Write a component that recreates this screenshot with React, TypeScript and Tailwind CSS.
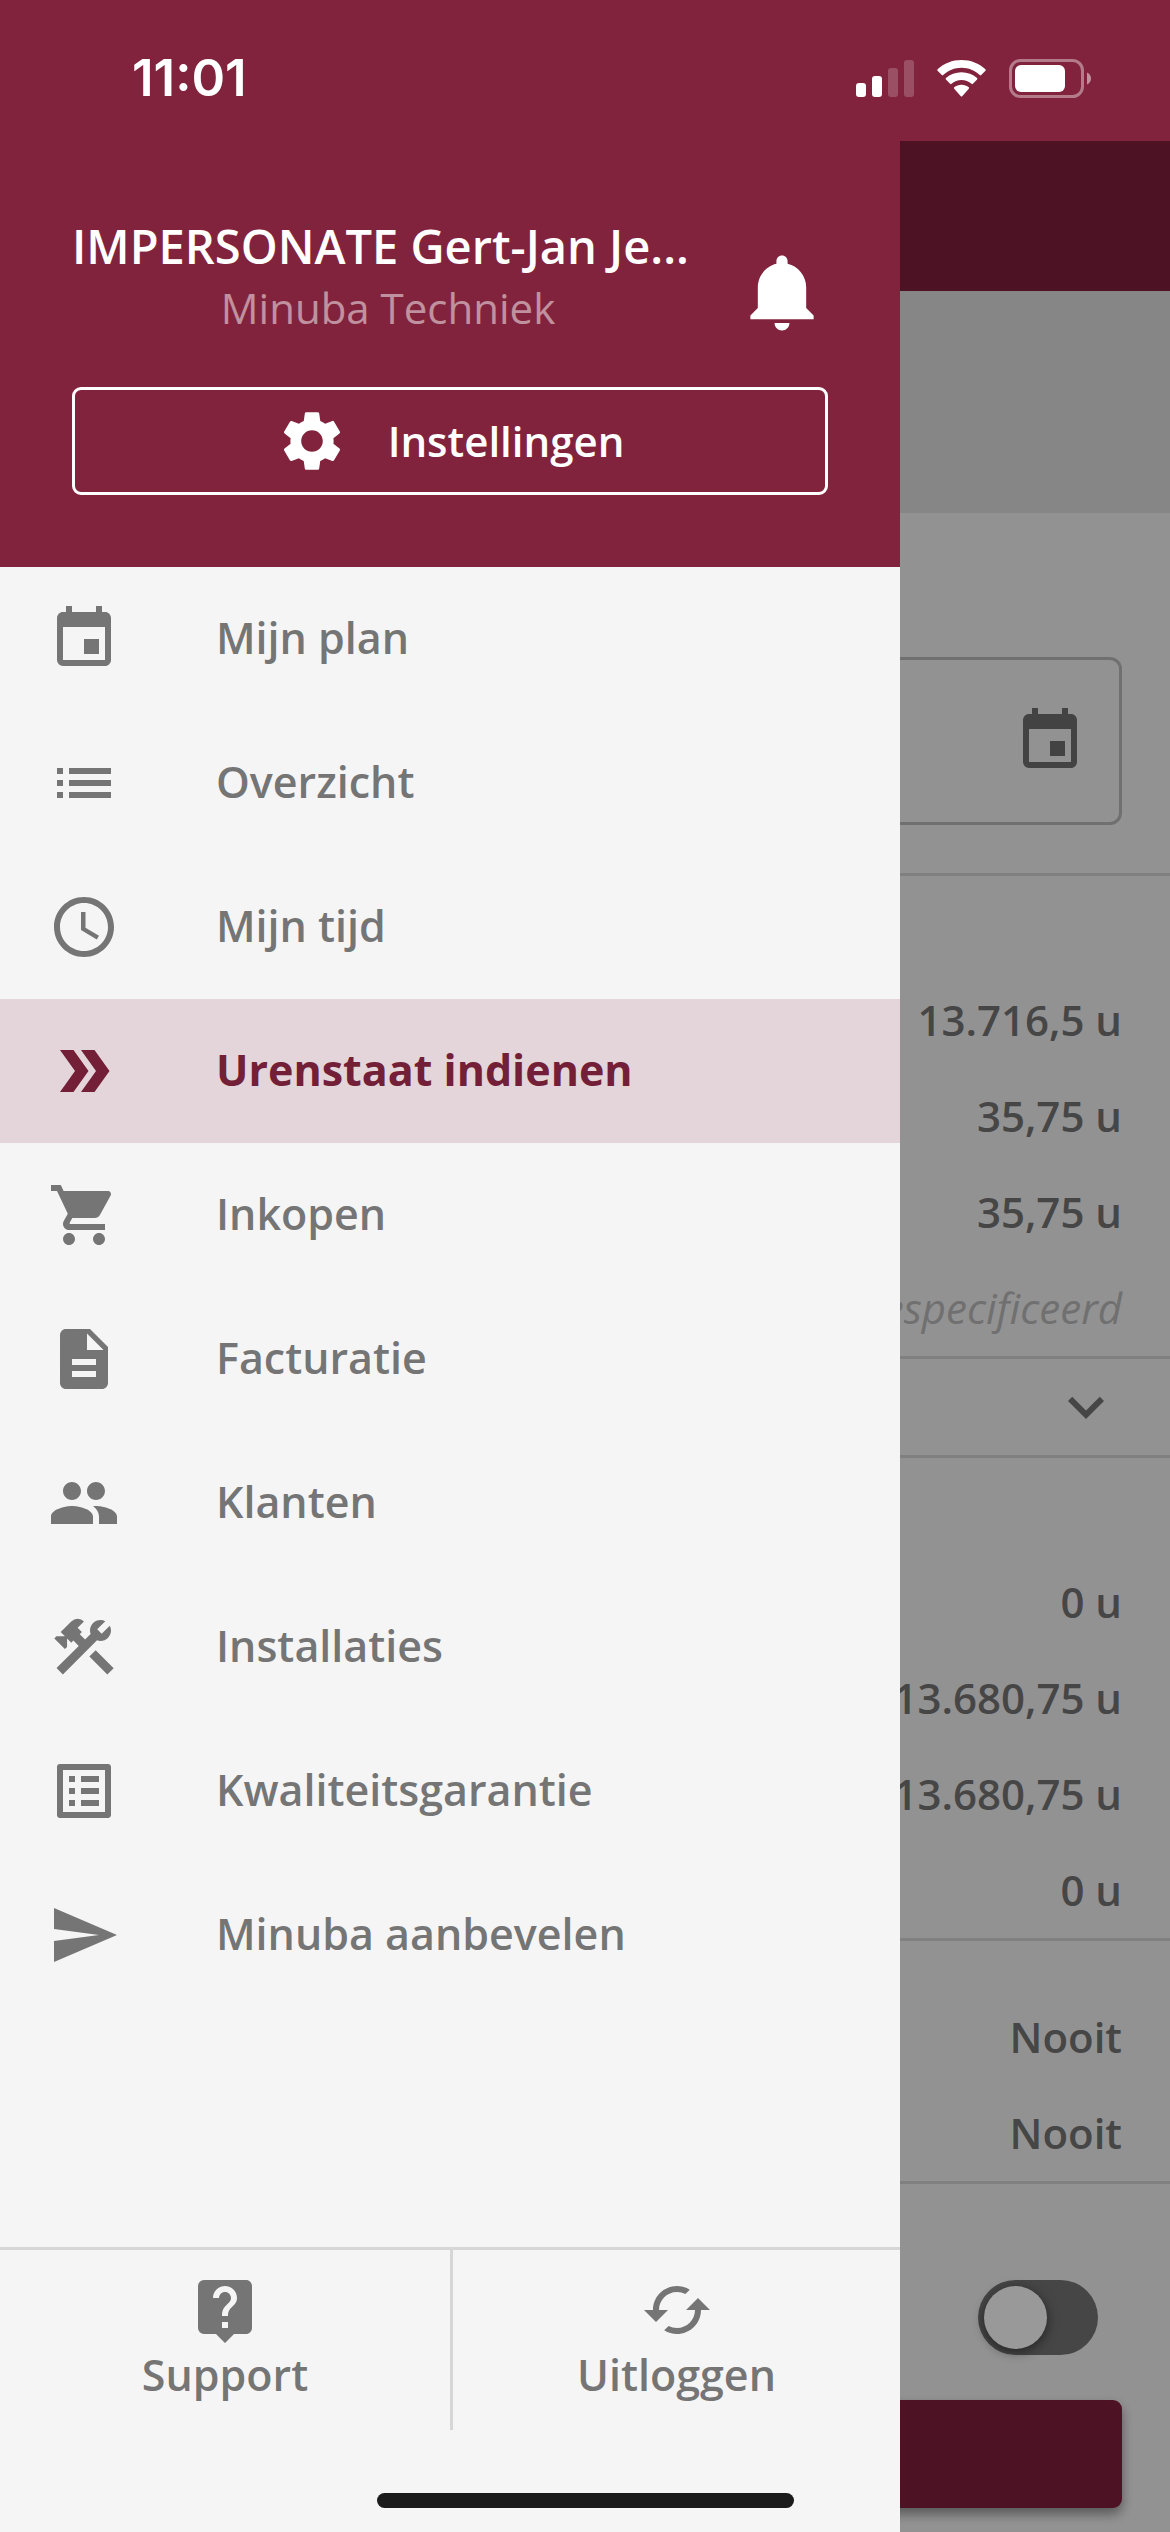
import React, { useState } from "react";
import {
  MdAccessTime,
  MdCached,
  MdConstruction,
  MdDescription,
  MdDoubleArrow,
  MdEvent,
  MdGroup,
  MdKeyboardArrowDown,
  MdList,
  MdListAlt,
  MdLiveHelp,
  MdSend,
  MdSettings,
  MdShoppingCart,
} from "react-icons/md";
import { IoMdNotifications } from "react-icons/io";
import type { IconType } from "react-icons";
import clsx from "clsx";

interface MenuItem {
  label: string;
  icon: IconType;
}

const menuItems: MenuItem[] = [
  { label: "Mijn plan", icon: MdEvent },
  { label: "Overzicht", icon: MdList },
  { label: "Mijn tijd", icon: MdAccessTime },
  { label: "Urenstaat indienen", icon: MdDoubleArrow },
  { label: "Inkopen", icon: MdShoppingCart },
  { label: "Facturatie", icon: MdDescription },
  { label: "Klanten", icon: MdGroup },
  { label: "Installaties", icon: MdConstruction },
  { label: "Kwaliteitsgarantie", icon: MdListAlt },
  { label: "Minuba aanbevelen", icon: MdSend },
];

const StatusBar: React.FC = () => (
  <div className="flex h-[141px] items-center justify-between bg-[#82233e] pt-[15px] pr-[78px] pl-[132px] text-white">
    <span className="font-['Inter',sans-serif] text-[51px] leading-[60px] font-semibold">
      11:01
    </span>
    <div className="flex items-center gap-[22px]">
      <svg width="58" height="37" viewBox="0 0 58 37" fill="currentColor">
        <rect x="0" y="23" width="10" height="14" rx="3" />
        <rect x="16" y="16" width="10" height="21" rx="3" />
        <rect x="32" y="8" width="10" height="29" rx="3" opacity="0.2" />
        <rect x="48" y="0" width="10" height="37" rx="3" opacity="0.2" />
      </svg>
      <svg width="51" height="37" viewBox="0 0 52 38" fill="currentColor">
        <path d="M26 8c7.200 0 13.800 2.800 18.800 7.500.4.400 1 .4 1.400 0l4.400-4.500c.4-.4.400-1 0-1.400C44 3.400 35.300 0 26 0S8 3.400 1.400 9.600c-.4.400-.4 1 0 1.400l4.400 4.500c.4.400 1 .4 1.400 0C12.200 10.800 18.800 8 26 8z" />
        <path d="M26 20.500c3.900 0 7.500 1.500 10.300 4 .4.400 1 .4 1.400 0l4.300-4.400c.4-.4.400-1 0-1.500C37.700 14.600 32.100 12.500 26 12.500s-11.700 2.100-16 6.100c-.4.500-.4 1.100 0 1.500l4.300 4.400c.4.400 1 .4 1.400 0 2.800-2.500 6.400-4 10.300-4z" />
        <path d="M33.500 29.400c.4-.4.400-1 0-1.400-2.100-1.700-4.700-2.700-7.500-2.700s-5.400 1-7.500 2.700c-.4.400-.4 1 0 1.400l6.800 7.900c.4.400 1 .4 1.400 0z" />
      </svg>
      <svg width="83" height="39" viewBox="0 0 83 39" fill="none">
        <rect x="1.500" y="1.500" width="72" height="36" rx="10" stroke="currentColor" strokeWidth="3" opacity="0.4" />
        <rect x="6" y="6" width="50" height="27" rx="6" fill="currentColor" />
        <path d="M78 13.500c2.500 1 4 3.400 4 6s-1.500 5-4 6z" fill="currentColor" opacity="0.500" />
      </svg>
    </div>
  </div>
);

interface ValueListProps {
  values: string[];
  note?: string;
  className?: string;
}

const ValueList: React.FC<ValueListProps> = ({ values, note, className }) => (
  <ul className={clsx("border-b-3 border-[#d5d5d5] px-12 text-right text-[#757575]", className)}>
    {values.map((value, index) => (
      <li key={index} className="text-[42px] leading-24 font-semibold">
        {value}
      </li>
    ))}
    {note && <li className="text-[42px] leading-24 text-[#bbbbbb] italic">{note}</li>}
  </ul>
);

const TimesheetPage: React.FC = () => {
  const [enabled, setEnabled] = useState(false);

  return (
    <main className="flex min-h-full flex-col bg-[#f4f4f4]">
      <div className="h-[150px] bg-[#81213d]" />
      <div className="h-[222px] bg-[#dfdfdf]" />

      <div className="border-b-3 border-[#d5d5d5] px-12 pt-36 pb-12">
        <div className="flex h-42 items-center justify-end rounded-xl border-3 border-[#bbbbbb] pr-[33px]">
          <input type="text" aria-label="Datum" className="min-w-0 flex-1 bg-transparent outline-none" />
          <button type="button" aria-label="Kies datum" className="text-[#707070]">
            <MdEvent size={72} />
          </button>
        </div>
      </div>

      <ValueList
        className="pt-24"
        values={["13.716,5 u", "35,75 u", "35,75 u"]}
        note="gespecificeerd"
      />

      <button
        type="button"
        aria-label="Meer tonen"
        className="flex h-[99px] items-center justify-end border-b-3 border-[#d5d5d5] px-12 text-[#757575]"
      >
        <MdKeyboardArrowDown size={72} />
      </button>

      <ValueList className="pt-24" values={["0 u", "13.680,75 u", "13.680,75 u", "0 u"]} />
      <ValueList className="pt-12" values={["Nooit", "Nooit"]} />

      <div className="flex flex-col px-12 pt-24 pb-6">
        <input
          type="checkbox"
          role="switch"
          aria-label="Bevestigen"
          checked={enabled}
          onChange={(e) => setEnabled(e.target.checked)}
          className="mr-6 flex h-[75px] w-30 appearance-none items-center self-end rounded-full bg-[#757575] p-1.5 before:size-[63px] before:rounded-full before:bg-white before:shadow-[0_3px_12px_rgba(0,0,0,0.5)] checked:justify-end"
        />
        <button
          type="button"
          aria-label="Indienen"
          className="mt-[45px] h-27 rounded-[9px] bg-[#81213d] shadow-[0_6px_12px_rgba(0,0,0,0.4)]"
        />
      </div>
    </main>
  );
};

const Drawer: React.FC = () => {
  const [active, setActive] = useState("Urenstaat indienen");

  return (
    <aside className="absolute inset-y-0 left-0 flex w-10/13 flex-col bg-[#f5f5f5]">
      <header className="bg-[#82233e] p-18 text-white">
        <div className="flex items-start gap-8">
          <div className="min-w-0 flex-1">
            <h1 className="text-[47px] leading-[66px] font-semibold whitespace-nowrap">
              IMPERSONATE Gert-Jan Je...
            </h1>
            <p className="text-center text-[42px] leading-[57px] text-white/50">Minuba Techniek</p>
          </div>
          <button type="button" aria-label="Meldingen" className="pt-[34px]">
            <IoMdNotifications size={92} />
          </button>
        </div>
        <button
          type="button"
          className="mt-12 flex h-27 w-full items-center justify-center gap-10 rounded-[9px] border-3 border-white text-[42px] font-semibold"
        >
          <MdSettings size={72} />
          <span className="pb-0.5">Instellingen</span>
        </button>
      </header>

      <nav className="flex-1">
        {menuItems.map(({ label, icon: Icon }) => (
          <button
            key={label}
            type="button"
            onClick={() => setActive(label)}
            className={clsx(
              "flex h-36 w-full items-center gap-24 px-12 text-[43px]",
              label === active
                ? "bg-[#e4d5da] font-bold text-[#731f37]"
                : "font-semibold text-[#757575]"
            )}
          >
            <Icon size={72} />
            <span className="pb-0.5">{label}</span>
          </button>
        ))}
      </nav>

      <footer className="grid grid-cols-2 border-t-3 border-[#d6d6d6] pb-[102px] text-[43px] leading-[57px] font-semibold text-[#757575]">
        <button type="button" className="flex h-45 flex-col items-center pt-6">
          <MdLiveHelp size={72} />
          Support
        </button>
        <button type="button" className="flex h-45 flex-col items-center border-l-3 border-[#d6d6d6] pt-6">
          <MdCached size={72} />
          Uitloggen
        </button>
      </footer>
    </aside>
  );
};

const App: React.FC = () => (
  <div className="relative flex min-h-screen flex-col font-['Open_Sans',sans-serif]">
    <StatusBar />
    <div className="relative flex-1">
      <TimesheetPage />
      <div className="absolute inset-0 bg-black/40" />
      <Drawer />
    </div>
    {/* home indicator */}
    <div className="absolute inset-x-0 bottom-6 mx-auto h-[15px] w-[417px] rounded-full bg-[#1b1b1b]" />
  </div>
);

export default App;
